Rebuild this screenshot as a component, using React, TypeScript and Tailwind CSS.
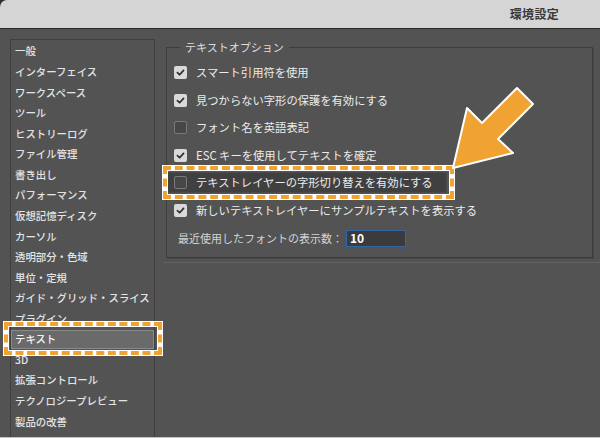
import React from 'react';

const categories = [
  '一般',
  'インターフェイス',
  'ワークスペース',
  'ツール',
  'ヒストリーログ',
  'ファイル管理',
  '書き出し',
  'パフォーマンス',
  '仮想記憶ディスク',
  'カーソル',
  '透明部分・色域',
  '単位・定規',
  'ガイド・グリッド・スライス',
  'プラグイン',
  'テキスト',
  '3D',
  '拡張コントロール',
  'テクノロジープレビュー',
  '製品の改善',
];

const options = [
  { label: 'スマート引用符を使用', checked: true },
  { label: '見つからない字形の保護を有効にする', checked: true },
  { label: 'フォント名を英語表記', checked: false },
  { label: 'ESC キーを使用してテキストを確定', checked: true },
  { label: 'テキストレイヤーの字形切り替えを有効にする', checked: false, marked: true },
  { label: '新しいテキストレイヤーにサンプルテキストを表示する', checked: true },
];

// white ring with orange dashes in the middle, open inside
function DashedFrame({ className }: { className: string }) {
  return (
    <div className={'absolute border-[6px] border-white pointer-events-none ' + className}>
      <div className="absolute -inset-[5px] border-[4px] border-dashed border-[#f0a232]" />
    </div>
  );
}

function Checkbox({ checked }: { checked: boolean }) {
  if (!checked) {
    return <div className="w-[13px] h-[13px] rounded-[2px] border border-[#7a7a7a] bg-[#474747] shrink-0" />;
  }
  return (
    <div className="w-[13px] h-[13px] rounded-[2px] bg-[#d9d9d9] flex items-center justify-center shrink-0">
      <svg width="9" height="9" viewBox="0 0 10 10">
        <path d="M1.6 5.2 L4 7.5 L8.4 2.6" fill="none" stroke="#2e2e2e" strokeWidth="1.9" strokeLinecap="round" strokeLinejoin="round" />
      </svg>
    </div>
  );
}

export default function App() {
  return (
    <div
      className="relative w-[600px] h-[438px] bg-[#2f2f2f] overflow-hidden flex flex-col"
      style={{ fontFamily: '"Noto Sans CJK JP", "Noto Sans", sans-serif' }}
    >
      {/* Title bar */}
      <div className="h-[29px] shrink-0 bg-[#d5d5d5] rounded-tl-[7px] border-b border-[#2b2b2b] flex items-center justify-end pr-[41px]">
        <span className="text-[12px] font-bold text-[#3a3a3a] tracking-[0.3px]">環境設定</span>
      </div>

      <div className="flex-1 bg-[#535353] flex">
        {/* Category list */}
        <div className="ml-[10px] mt-[10px] w-[145px] border border-b-0 border-[#3f3f3f] pt-px shrink-0">
          {categories.map((c) => (
            <div key={c} className="relative">
              {c === 'テキスト' ? (
                <>
                  <div className="h-[20.57px] flex items-center">
                    <div className="h-[19px] w-full bg-[#6a6a6a] border border-[#8a8a8a] flex items-center pl-[3px] text-[10.4px] font-medium text-[#f2f2f2]">
                      {c}
                    </div>
                  </div>
                  <DashedFrame className="-left-[8px] -right-[9px] -top-[8px] -bottom-[7px]" />
                </>
              ) : (
                <div className="h-[20.57px] flex items-center pl-[4px] text-[10.4px] font-medium text-[#e4e4e4] whitespace-nowrap">
                  {c}
                </div>
              )}
            </div>
          ))}
        </div>

        {/* Options */}
        <div className="flex-1 ml-[11px] mr-[7px]">
          <div className="border-b border-[#636363] pb-[4px] -ml-[3px] -mr-[7px] pl-[3px] pr-[7px]">
            <fieldset className="mt-[11px] border border-[#3d3d3d] shadow-[1px_1px_0_#474747] h-[218px] px-0">
              <legend className="ml-[13px] px-[5px] text-[11px] leading-[14px] text-[#dedede]">テキストオプション</legend>
              <div className="pt-[5px] flex flex-col">
                {options.map((o) => (
                  <div key={o.label} className="h-[27.5px] flex items-center">
                    {o.marked ? (
                      <div className="relative">
                        <div className="w-[280px] h-[21px] bg-[#404040] border border-[#4b4b4b] flex items-center gap-[9px] pl-[6px]">
                          <Checkbox checked={o.checked} />
                          <span className="text-[11.3px] text-[#ececec] whitespace-nowrap">{o.label}</span>
                        </div>
                        <DashedFrame className="-left-[5px] -right-[8px] -top-[7px] -bottom-[7px]" />
                      </div>
                    ) : (
                      <div className="flex items-center gap-[9px] pl-[7px]">
                        <Checkbox checked={o.checked} />
                        <span className="text-[11.3px] text-[#ececec] whitespace-nowrap">{o.label}</span>
                      </div>
                    )}
                  </div>
                ))}
                <div className="h-[28px] flex items-center pl-[11px] gap-[3px]">
                  <span className="text-[11px] text-[#d4d4d4] whitespace-nowrap">最近使用したフォントの表示数：</span>
                  <div className="w-[60px] h-[17px] bg-[#3b3b3b] border-[1.5px] border-[#2f66a6] flex items-center pl-[3px] text-[12px] font-bold text-white leading-none">
                    10
                  </div>
                </div>
              </div>
            </fieldset>
          </div>
        </div>
      </div>

      <div className="h-px bg-[#c4c4c4] shrink-0" />

      {/* Callout arrow */}
      <svg className="absolute left-[440px] top-[75px] pointer-events-none" width="110" height="110" viewBox="440 75 110 110">
        <polygon
          points="453,168 467,108 482,123 517,88 533,104 498,139 513,153"
          fill="#f0a232"
          stroke="#ffffff"
          strokeWidth="2"
          strokeLinejoin="round"
        />
      </svg>
    </div>
  );
}
